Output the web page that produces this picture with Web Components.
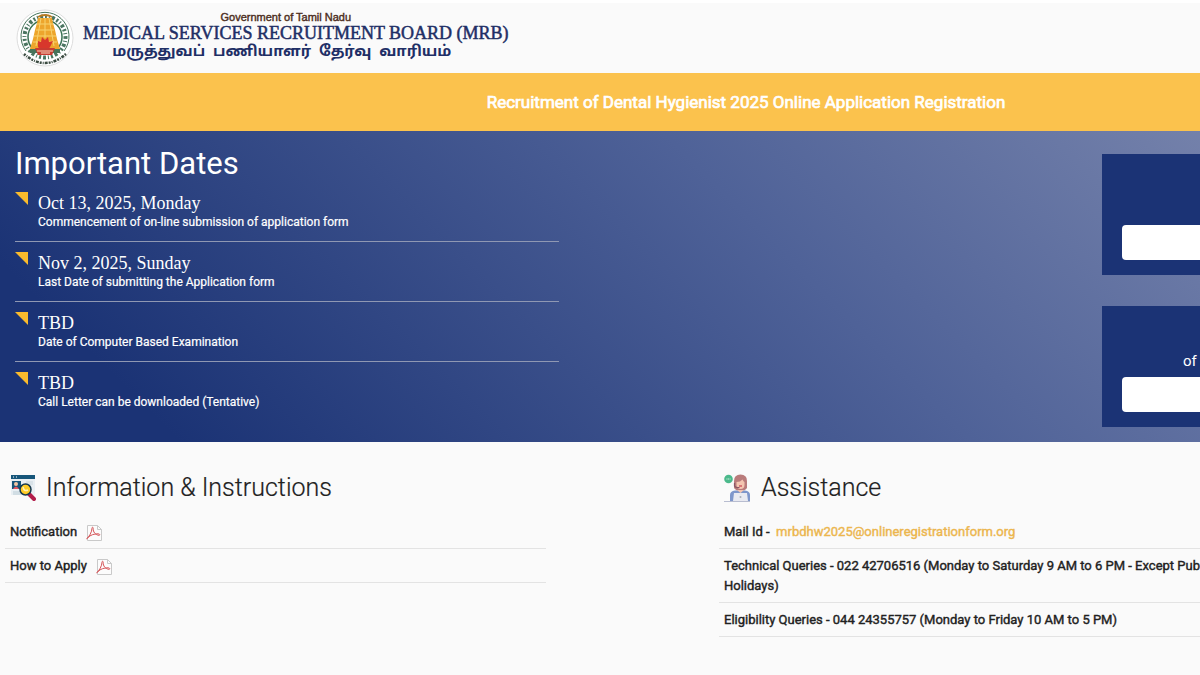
<!DOCTYPE html>
<html lang="en">
<head>
<meta charset="utf-8">
<title>Medical Services Recruitment Board</title>
<style>
  html {
    background: #fafafa;
  }
  body {
    margin: 0;
    overflow-x: hidden;
    background: #fafafa;
    color: #212121;
    font-family: Roboto, "Liberation Sans", sans-serif;
    font-size: 13px;
    --navy: #1b3375;
    --amber: #fbc24d;
    --line: #e3e3e3;
  }
</style>
</head>
<body>
<mrb-page>
  <mrb-header slot="header"></mrb-header>
  <mrb-banner slot="header">Recruitment of Dental Hygienist 2025 Online Application Registration</mrb-banner>
  <mrb-hero slot="hero">
    <mrb-date slot="dates" date="Oct 13, 2025, Monday">Commencement of on-line submission of application form</mrb-date>
    <mrb-date slot="dates" date="Nov 2, 2025, Sunday">Last Date of submitting the Application form</mrb-date>
    <mrb-date slot="dates" date="TBD">Date of Computer Based Examination</mrb-date>
    <mrb-date slot="dates" date="TBD">Call Letter can be downloaded (Tentative)</mrb-date>
    <mrb-login slot="actions" label="Register"></mrb-login>
    <mrb-login slot="actions" label="Login">of</mrb-login>
  </mrb-hero>
  <mrb-section heading="Information &amp; Instructions">
    <svg slot="icon" width="26" height="26" viewBox="0 0 26 26">
      <rect x="1" y="1" width="24" height="19" fill="#e9eff3"/>
      <path d="M1 0h24v4H1z" fill="#17567a"/>
      <path d="M3 2h1M6 2h1" stroke="#fff"/>
      <path d="M16 7h7M16 9h7" stroke="#c8d5dc"/>
      <rect x="2" y="6" width="9" height="8" fill="#17567a"/>
      <circle cx="6" cy="9" r="2" fill="#f3c5a2"/>
      <path d="M3 14q3-5 6 0z" fill="#e85660"/>
      <path d="M3 17h7M3 19h8" stroke="#b9cbd4"/>
      <path d="M19 19l5 5" stroke="#b21d4a" stroke-width="4" stroke-linecap="round"/>
      <circle cx="15.500" cy="14.500" r="5.500" fill="#ffcc26" stroke="#17384e" stroke-width="1.500"/>
      <path d="M13 12q1 5 5 3" stroke="#fff3b8" fill="none" stroke-width="1.500"/>
    </svg>
    <mrb-row><a href="#notification">Notification <mrb-pdf></mrb-pdf></a></mrb-row>
    <mrb-row><a href="#how-to-apply">How to Apply <mrb-pdf></mrb-pdf></a></mrb-row>
  </mrb-section>
  <mrb-section heading="Assistance">
    <svg slot="icon" width="27" height="28" viewBox="0 0 27 28">
      <circle cx="4.500" cy="5" r="4.300" fill="#4bb98b"/>
      <path d="M2.500 5h4" stroke="#d9f5e7" stroke-dasharray="1 .6"/>
      <path d="M10 14V7q0-6.500 6.500-6.500T23 7v7q-2 3-6.500 3T10 14z" fill="#b97b7b"/>
      <path d="M12.500 8q4 0 6-2.500 1 2 2 2.500v3q0 4-4 4t-4-4z" fill="#f4c5b0"/>
      <path d="M10.500 9v3q1 2 5 1.500" stroke="#8a5666" fill="none" stroke-width="1.200"/>
      <path d="M15 12h3" stroke="#c73e50" stroke-width="1.200"/>
      <path d="M6 27v-6q0-4 5-4.500h10q5 .5 5 4.500v6z" fill="#7f97cb"/>
      <path d="M13 16h7l-3.500 3z" fill="#f4c5b0"/>
      <path d="M9 27l1-8h13l1 8z" fill="#e9eaf1"/>
      <circle cx="16.500" cy="23" r="1" fill="#a7adba"/>
      <path d="M0 27.500h26" stroke="#b8bdd0"/>
    </svg>
    <mrb-row>Mail Id -&nbsp; <a class="mail" href="mailto:mrbdhw2025@onlineregistrationform.org">mrbdhw2025@onlineregistrationform.org</a></mrb-row>
    <mrb-row>Technical Queries - 022 42706516 (Monday to Saturday 9 AM to 6 PM - Except Public Holidays)</mrb-row>
    <mrb-row>Eligibility Queries - 044 24355757 (Monday to Friday 10 AM to 5 PM)</mrb-row>
  </mrb-section>
</mrb-page>

<script>
/**
 * Attaches an open shadow root and fills it with the given markup.
 */
function attach(el, html) {
  el.attachShadow({ mode: 'open' }).innerHTML = html;
}

/**
 * @class MrbPage
 * @description Page frame. It is never narrower than the two information columns need.
 */
class MrbPage extends HTMLElement {
  constructor() {
    super();
    attach(this, `
      <style>
        :host {
          display: block;
          min-width: 1492px;
        }
        main {
          display: grid;
          grid-template-columns: repeat(2, minmax(541px, 1fr));
          column-gap: 173px;
          padding: 25px 232px 0 5px;
          align-items: start;
        }
      </style>
      <slot name="header"></slot>
      <slot name="hero"></slot>
      <main><slot></slot></main>
    `);
  }
}

/**
 * @class MrbHeader
 * @description State emblem and the name of the board.
 */
class MrbHeader extends HTMLElement {
  constructor() {
    super();
    attach(this, `
      <style>
        :host {
          display: flex;
          align-items: center;
          gap: 9px;
          height: 73px;
          padding-left: 16px;
          box-sizing: border-box;
          border-top: 3px solid #fff;
        }
        .names {
          display: flex;
          flex-direction: column;
          align-items: center;
          color: #1f2f66;
          white-space: nowrap;
          padding-bottom: 2px;
        }
        .gov {
          font: 11px/12px "Liberation Sans", Arial, sans-serif;
          -webkit-text-stroke: 0.4px;
          color: #4c2d20;
          padding-right: 20px;
        }
        h1 {
          margin: 0;
          font: 18px/20px "Liberation Serif", "Times New Roman", serif;
          -webkit-text-stroke: 0.5px;
        }
        .tamil {
          font: bold 15px/20px "Noto Sans Tamil", "Lohit Tamil", "Noto Sans", sans-serif;
          padding-right: 28px;
        }
      </style>
      <svg width="58" height="58" viewBox="0 0 58 58" aria-label="Tamil Nadu emblem">
        <circle cx="29" cy="29" r="28" fill="#fff" stroke="#dedede"/>
        <path d="M10 42A24 24 0 1 1 48 42" fill="none" stroke="#47745b"/>
        <circle cx="29" cy="28" r="20.500" fill="none" stroke="#4a7560" stroke-width="4" stroke-dasharray="2 2 1 2 3 2"/>
        <circle cx="29" cy="28" r="17" fill="#fff" stroke="#3c7355" stroke-width="1.500"/>
        <path d="M22 9h14l1 5 2 7 2 9 3 10H14l3-10 2-9 2-7z" fill="#eda52c"/>
        <path d="M25 9l-5 28M29 9v20M33 9l5 28M21 15h16M20 21h18M18 27h22M17 33h24" stroke="#f8d36f" fill="none"/>
        <path d="M22 8q7-4 14 0" stroke="#b87b23" stroke-width="2" fill="none"/>
        <path d="M14 40h30v4H14z" fill="#47745b"/>
        <path d="M22 32l3 1 1-5 3 3 3-3 1 5 4-1-3 6-2 3h-7l-3-3z" fill="#d8372c"/>
        <path d="M19 39h20l-3 7H22z" fill="#c93b31"/>
        <path d="M21 42h16M25 44h9" stroke="#f5d9bd"/>
        <path d="M8 45q21 18 42 0" fill="none" stroke="#3b4b41" stroke-width="2.500" stroke-dasharray="2 1 1 1 3 1"/>
      </svg>
      <div class="names">
        <div class="gov">Government of Tamil Nadu</div>
        <h1>MEDICAL SERVICES RECRUITMENT BOARD (MRB)</h1>
        <div class="tamil" lang="ta">மருத்துவப்&nbsp; பணியாளர்&nbsp; தேர்வு&nbsp; வாரியம்</div>
      </div>
    `);
  }
}

/**
 * @class MrbBanner
 * @description Amber strip with the title of the recruitment.
 */
class MrbBanner extends HTMLElement {
  constructor() {
    super();
    attach(this, `
      <style>
        :host {
          display: block;
          background: var(--amber);
          color: #fff;
          text-align: center;
          font-size: 17px;
          -webkit-text-stroke: 0.7px;
          line-height: 20px;
          padding: 19px 0;
        }
      </style>
      <slot></slot>
    `);
  }
}

/**
 * @class MrbHero
 * @description Blue area: the important dates on the left, the action cards on the right.
 */
class MrbHero extends HTMLElement {
  constructor() {
    super();
    attach(this, `
      <style>
        :host {
          display: flex;
          justify-content: space-between;
          align-items: flex-start;
          padding: 0 15px;
          height: 311px;
          background: linear-gradient(45deg, #1b3375 10%, #4f6298 54%, #7582ab 85%);
          color: #fff;
        }
        h2 {
          margin: 0;
          padding: 13px 0 8px;
          font-size: 31px;
          font-weight: 400;
          line-height: 40px;
        }
        .dates {
          width: 544px;
        }
        .actions {
          display: flex;
          flex-direction: column;
          gap: 31px;
          width: 375px;
          padding-top: 23px;
        }
      </style>
      <div class="dates">
        <h2>Important Dates</h2>
        <slot name="dates"></slot>
      </div>
      <div class="actions"><slot name="actions"></slot></div>
    `);
  }
}

/**
 * @class MrbDate
 * @description One dated event. The date attribute holds the text of the date.
 */
class MrbDate extends HTMLElement {
  constructor() {
    super();
    attach(this, `
      <style>
        :host {
          display: flex;
          gap: 10px;
          height: 60px;
          box-sizing: border-box;
          border-bottom: 1px solid #8f98b3;
        }
        :host(:last-of-type) {
          border-bottom: 0;
        }
        :host(:nth-of-type(n+2)) svg,
        :host(:nth-of-type(n+2)) div {
          margin-top: 10px;
        }
        :host(:first-of-type) {
          height: 50px;
        }
        svg {
          flex: none;
        }
        time {
          display: block;
          font: 18px/22px "Liberation Serif", "Times New Roman", serif;
        }
        p {
          margin: 0;
          font-size: 12px;
          -webkit-text-stroke: 0.2px;
          line-height: 16px;
        }
      </style>
      <svg width="13" height="13"><path d="M0 0h13v13z" fill="#fabb2d"/></svg>
      <div>
        <time></time>
        <p><slot></slot></p>
      </div>
    `);
  }

  connectedCallback() {
    this.shadowRoot.querySelector('time').textContent = this.getAttribute('date');
  }
}

/**
 * @class MrbLogin
 * @description Navy card with a caption and a wide white button.
 */
class MrbLogin extends HTMLElement {
  constructor() {
    super();
    attach(this, `
      <style>
        :host {
          display: flex;
          flex-direction: column;
          justify-content: flex-end;
          gap: 6px;
          height: 121px;
          box-sizing: border-box;
          padding: 0 20px 15px;
          background: var(--navy);
        }
        p {
          margin: 0;
          padding-left: 61px;
          font-size: 15px;
          line-height: 20px;
        }
        button {
          height: 35px;
          border: 0;
          border-radius: 4px;
          background: #fff;
        }
      </style>
      <p><slot></slot></p>
      <button type="button"></button>
    `);
  }

  connectedCallback() {
    this.shadowRoot.querySelector('button').setAttribute('aria-label', this.getAttribute('label'));
  }
}

/**
 * @class MrbSection
 * @description Column with an icon, a heading and rows.
 */
class MrbSection extends HTMLElement {
  constructor() {
    super();
    attach(this, `
      <style>
        :host {
          display: block;
        }
        header {
          display: flex;
          align-items: center;
          gap: 10px;
          height: 42px;
          padding: 0 5px;
          margin-bottom: 6px;
        }
        h2 {
          margin: 0;
          font-size: 25px;
          font-weight: 300;
          -webkit-text-stroke: 0.2px;
          line-height: 32px;
        }
      </style>
      <header><slot name="icon"></slot><h2></h2></header>
      <slot></slot>
    `);
  }

  connectedCallback() {
    this.shadowRoot.querySelector('h2').textContent = this.getAttribute('heading');
  }
}

/**
 * @class MrbRow
 * @description Underlined row of a section.
 */
class MrbRow extends HTMLElement {
  constructor() {
    super();
    attach(this, `
      <style>
        :host {
          display: block;
          padding: 7px 0 6px 5px;
          border-bottom: 1px solid var(--line);
          -webkit-text-stroke: 0.4px;
          line-height: 20px;
        }
        ::slotted(a) {
          color: inherit;
          text-decoration: none;
        }
        ::slotted(a.mail) {
          color: #ecb64e;
        }
      </style>
      <slot></slot>
    `);
  }
}

/**
 * @class MrbPdf
 * @description Small PDF document icon.
 */
class MrbPdf extends HTMLElement {
  constructor() {
    super();
    attach(this, `
      <style>
        :host {
          display: inline-block;
          height: 16px;
          margin-left: 6px;
          vertical-align: middle;
        }
        svg {
          display: block;
        }
      </style>
      <svg width="16" height="16" viewBox="0 0 16 16" fill="none">
        <path d="M1.500.5h10l4 4v11h-14z" fill="#fcfcfc" stroke="#c9c9c9"/>
        <path d="M11.500.5v4h4" stroke="#c9c9c9"/>
        <path d="M.7 13.800C3 12 6 7 6 3.200 6 1.800 7.400 2 7.200 3.500 7 7 9.500 10 13 10.300c1.500 0 .8-1.500-1-1.500C8 8.800 4.500 10 2 12.500z" stroke="#d65357"/>
      </svg>
    `);
  }
}

customElements.define('mrb-page', MrbPage);
customElements.define('mrb-header', MrbHeader);
customElements.define('mrb-banner', MrbBanner);
customElements.define('mrb-hero', MrbHero);
customElements.define('mrb-date', MrbDate);
customElements.define('mrb-login', MrbLogin);
customElements.define('mrb-section', MrbSection);
customElements.define('mrb-row', MrbRow);
customElements.define('mrb-pdf', MrbPdf);
</script>
</body>
</html>
